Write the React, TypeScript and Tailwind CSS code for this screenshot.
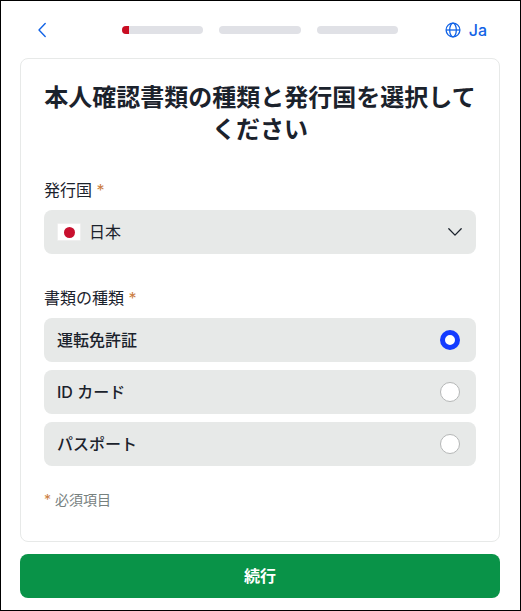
import { useState } from "react";

const arrSteps = [
    { name: "document", fill: "w-[7px]" },
    { name: "selfie", fill: "w-0" },
    { name: "review", fill: "w-0" },
];

const arrDocs = [
    { id: "license", name: "運転免許証" },
    { id: "id-card", name: "ID カード" },
    { id: "passport", name: "パスポート" },
];

const Header = () => {
    return (
        <header className="flex h-[57px] items-center pr-[13px] pl-[17px]">
            <button type="button" aria-label="戻る" className="flex h-6 w-[85px] shrink-0 items-center text-[#1263e6]">
                <svg width="10" height="16" viewBox="0 0 10 16" fill="none" className="mt-px" stroke="currentColor" strokeWidth="1.4">
                    <path d="M8.2 1.6 2 8l6.2 6.4" strokeLinecap="round" strokeLinejoin="round" />
                </svg>
            </button>
            <div className="flex w-[276px] gap-4 pt-px">
                {arrSteps.map((el) => {
                    return (
                        <div key={el.name} className="h-2 flex-1 overflow-hidden rounded-full bg-[#e0e1e6]">
                            <div className={`h-full bg-[#c90c22] ${el.fill}`} />
                        </div>
                    );
                })}
            </div>
            <button type="button" className="ml-auto flex items-center gap-2 pt-px font-medium text-[#1263e6]">
                <svg width="16" height="16" viewBox="0 0 16 16" fill="none" stroke="currentColor" strokeWidth="1.3">
                    <circle cx="8" cy="8" r="6.9" />
                    <ellipse cx="8" cy="8" rx="3.3" ry="6.9" />
                    <path d="M1 8h14" />
                </svg>
                <span>Ja</span>
            </button>
        </header>
    );
};

const Required = () => <span className="text-[#cb7d42]">*</span>;

export default function App() {
    const [doc, setDoc] = useState("license");

    return (
        <main
            lang="ja"
            className="flex h-[611px] w-[521px] flex-col border border-black bg-white pr-5 pl-[19px] font-['Inter','Noto_Sans_CJK_JP',sans-serif] text-base text-[#1b222c]"
        >
            <Header />
            <section className="h-[484px] rounded-lg border border-[#e7e9e8] px-[23px] pt-[23px]">
                <h1 className="text-center text-2xl leading-8 font-bold">
                    本人確認書類の種類と発行国を選択してください
                </h1>
                <p className="mt-8 leading-6">
                    発行国 <Required />
                </p>
                <button
                    type="button"
                    className="mt-2 flex h-11 w-full items-center rounded-lg bg-[#e7e9e8] pr-[13px] pl-[13px]"
                >
                    <span className="flex h-[18px] w-6 items-center justify-center rounded-[1px] border border-[#efefef] bg-white">
                        <span className="size-[11px] rounded-full bg-[#c8102e]" />
                    </span>
                    <span className="ml-2">日本</span>
                    <svg width="16" height="16" viewBox="0 0 16 16" fill="none" className="ml-auto" stroke="currentColor" strokeWidth="1.3">
                        <path d="M1.8 4.7 8 11.1l6.2-6.4" strokeLinecap="round" strokeLinejoin="round" />
                    </svg>
                </button>
                <p className="mt-8 leading-6">
                    書類の種類 <Required />
                </p>
                <div className="mt-2 flex flex-col gap-2">
                    {arrDocs.map((el) => {
                        return (
                            <label
                                key={el.id}
                                className="flex h-11 items-center justify-between rounded-lg bg-[#e7e9e8] pr-4 pl-[13px] font-medium"
                            >
                                {el.name}
                                <input
                                    type="radio"
                                    name="doc"
                                    checked={doc === el.id}
                                    onChange={() => setDoc(el.id)}
                                    className="size-5 appearance-none rounded-full border border-[#b5b7b7] bg-white checked:border-5 checked:border-[#143cff]"
                                />
                            </label>
                        );
                    })}
                </div>
                <p className="mt-6 text-sm leading-5 text-[#77817f]">
                    <Required /> 必須項目
                </p>
            </section>
            <button type="button" className="mt-3 h-11 shrink-0 rounded-lg bg-[#099348] font-bold text-white">
                続行
            </button>
        </main>
    );
}
